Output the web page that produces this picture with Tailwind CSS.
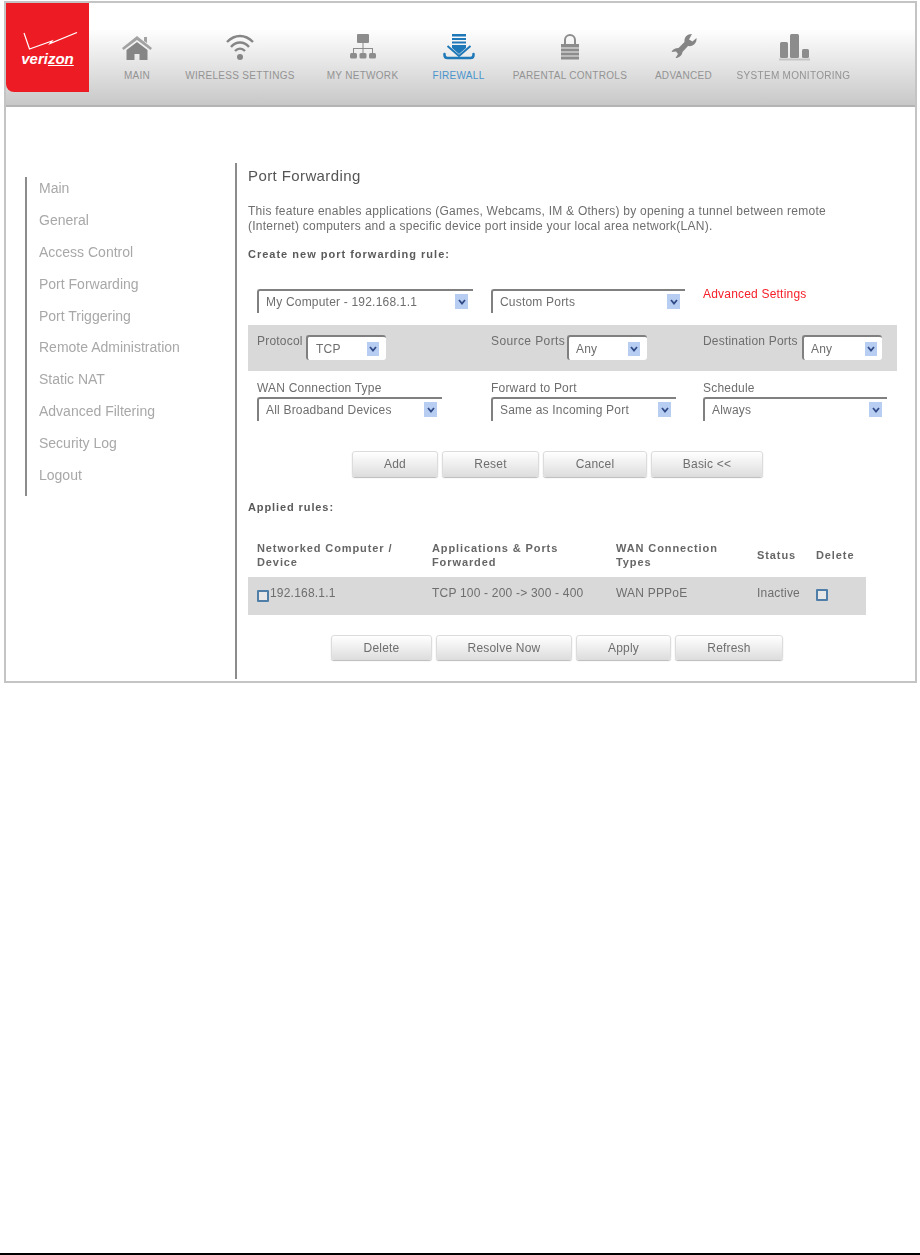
<!DOCTYPE html>
<html lang="en">

<head>
    <meta charset="UTF-8">
    <meta name="viewport" content="width=device-width, initial-scale=1.0">
    <script src="https://cdn.jsdelivr.net/npm/@tailwindcss/browser@4"></script>
    <title>Port Forwarding</title>
</head>

<body class="bg-white font-['Liberation_Sans',Arial,sans-serif]">
    <div class="h-[1255px] flex flex-col pt-px pl-1">

        <!-- Marco -->
        <div class="w-[913px] h-[682px] border-2 border-[#c4c4c4] overflow-hidden blur-[0.5px]">

            <!-- Cabecera -->
            <header class="flex h-[104px] border-b-2 border-[#b4b4b4] bg-gradient-to-b from-white from-25% to-[#c8c8c8]">
                <div class="w-[83px] h-[89px] shrink-0 bg-[#ed1c24] rounded-bl-lg flex flex-col items-center pt-[29px]">
                    <svg class="ml-[6px]" width="56" height="20" viewBox="0 0 56 20" fill="none" stroke="white">
                        <path d="M1 1 L6.500 17 L29 9 L27 11.500 L54 0.500" stroke-width="1.200" />
                    </svg>
                    <span class="text-white font-bold italic text-[15px] leading-[12px] mt-[1px]">veri<span class="underline">zon</span></span>
                </div>

                <nav class="flex pt-[30px] text-[10px] tracking-[0.3px] text-[#939393]">
                    <a class="flex flex-col items-center ml-[36px] w-[24px]">
                        <svg class="h-[28px] w-[32px] shrink-0" viewBox="0 0 32 28" fill="#858585">
                            <path fill="#a2a2a2" d="M16 3 L31 15 L29.500 17 L16 7 L2.500 17 L1 15 Z M23 4 H26 V10 L23 8 Z" />
                            <path d="M5.500 17 L16 9 L26.500 17 V27 H18.500 V21 H13.500 V27 H5.500 Z" />
                        </svg>
                        <span class="mt-[8px] whitespace-nowrap leading-[14px]">MAIN</span>
                    </a>
                    <a class="flex flex-col items-center ml-[36px] w-[110px]">
                        <svg class="h-[28px] w-[30px] shrink-0" viewBox="0 0 30 28" fill="none" stroke="#858585" stroke-width="2.400">
                            <path d="M2 9 C10 1 20 1 28 9 M6 14 C11 8 19 8 24 14 M10 18 C13 15 17 15 20 18" />
                            <circle cx="15" cy="24" r="3" fill="#858585" stroke="none" />
                        </svg>
                        <span class="mt-[8px] whitespace-nowrap leading-[14px]">WIRELESS SETTINGS</span>
                    </a>
                    <a class="flex flex-col items-center ml-[32px] w-[71px]">
                        <svg class="h-[28px] w-[28px] shrink-0" viewBox="0 0 28 28" fill="#8c8c8c">
                            <rect x="8" y="1" width="12" height="9" rx="1" />
                            <path d="M13.500 10 h1 v5 h9.500 v5 h-1 v-4 h-8.500 v4 h-1 v-4 h-8.500 v4 h-1 v-5 h9.500 z" />
                            <rect x="1" y="20" width="7" height="5.500" rx="1.500" />
                            <rect x="10.500" y="20" width="7" height="5.500" rx="1.500" />
                            <rect x="20" y="20" width="7" height="5.500" rx="1.500" />
                        </svg>
                        <span class="mt-[8px] whitespace-nowrap leading-[14px]">MY NETWORK</span>
                    </a>
                    <a class="flex flex-col items-center ml-[35px] w-[51px] text-[#4a94cc]">
                        <svg class="h-[28px] w-[32px] shrink-0" viewBox="0 0 32 28" fill="#1f78b8">
                            <rect x="9" y="1" width="14" height="2.500" />
                            <rect x="9" y="5" width="14" height="2" />
                            <rect x="9" y="8.500" width="14" height="2" />
                            <path d="M9 12 H23 V15 L16 21 L9 15 Z" />
                            <path fill="none" stroke="#1f78b8" stroke-width="2" d="M4.500 13 L16 23 L27.500 13" />
                            <path fill="none" stroke="#1f78b8" stroke-width="2.500" stroke-linecap="round" d="M1.500 21 V22 Q1.500 25 4.500 25 H27.500 Q30.500 25 30.500 22 V21" />
                        </svg>
                        <span class="mt-[8px] whitespace-nowrap leading-[14px]">FIREWALL</span>
                    </a>
                    <a class="flex flex-col items-center ml-[28px] w-[116px]">
                        <svg class="h-[28px] w-[20px] shrink-0" viewBox="0 0 20 28" fill="#8c8c8c">
                            <path d="M4 12 V7 A6 6 0 0 1 16 7 V12 H14 V7 A4 4 0 0 0 6 7 V12 Z" />
                            <rect x="1" y="11" width="18" height="3.500" />
                            <rect x="1" y="15.500" width="18" height="3" />
                            <rect x="1" y="19.500" width="18" height="3" />
                            <rect x="1" y="23.500" width="18" height="3" />
                        </svg>
                        <span class="mt-[8px] whitespace-nowrap leading-[14px]">PARENTAL CONTROLS</span>
                    </a>
                    <a class="flex flex-col items-center ml-[27px] w-[57px]">
                        <svg class="h-[28px] w-[26px] shrink-0" viewBox="0 0 26 28" fill="#858585">
                            <path d="M21 1 C16 1 13 4 13.500 9 L7.500 15 C4 15 2 16 0.500 19 L5 18.500 L7 21 L4.500 25 C8 25 11 22.500 11.500 19 L17 13 C22 14 26 10 25.500 5 L21.500 8.500 L18 6.500 Z" />
                        </svg>
                        <span class="mt-[8px] whitespace-nowrap leading-[14px]">ADVANCED</span>
                    </a>
                    <a class="flex flex-col items-center ml-[26px] w-[111px]">
                        <svg class="h-[28px] w-[32px] shrink-0" viewBox="0 0 32 28" fill="#8c8c8c">
                            <rect x="2" y="9" width="8" height="16" rx="1.500" />
                            <rect x="12" y="1" width="9" height="24" rx="1.500" />
                            <rect x="24" y="16" width="7" height="9" rx="1.500" />
                            <rect x="1" y="25.500" width="31" height="2" fill="#c4c4c4" />
                        </svg>
                        <span class="mt-[8px] whitespace-nowrap leading-[14px]">SYSTEM MONITORING</span>
                    </a>
                </nav>
            </header>

            <div class="flex">
                <!-- Menu lateral -->
                <aside class="w-[210px] ml-[19px] shrink-0 mt-[70px] h-[319px] border-l-2 border-[#8c8c8c] pl-[12px] text-[14px] leading-[32px] text-[#a8a8a8]">
                    <p class="-mt-[5px] h-[31.900px]">Main</p>
                    <p class="h-[31.900px]">General</p>
                    <p class="h-[31.900px]">Access Control</p>
                    <p class="h-[31.900px]">Port Forwarding</p>
                    <p class="h-[31.900px]">Port Triggering</p>
                    <p class="h-[31.900px]">Remote Administration</p>
                    <p class="h-[31.900px]">Static NAT</p>
                    <p class="h-[31.900px]">Advanced Filtering</p>
                    <p class="h-[31.900px]">Security Log</p>
                    <p class="h-[31.900px]">Logout</p>
                </aside>

                <!-- Contenido -->
                <main class="mt-[56px] h-[516px] w-[670px] border-l-2 border-[#8c8c8c] pl-[11px] text-[#6e6e6e] text-[12px] tracking-[0.2px]">
                    <h1 class="h-[24px] leading-[26px] text-[15px] tracking-[0.4px] text-[#555555]">Port Forwarding</h1>
                    <p class="mt-[17px] leading-[15px] w-[600px] tracking-[0.25px]">This feature enables applications (Games, Webcams, IM &amp; Others) by opening a tunnel between remote (Internet) computers and a specific device port inside your local area network(LAN).</p>
                    <p class="mt-[13px] h-[14px] leading-[14px] font-bold text-[11px] tracking-[1px] text-[#5a5a5a]">Create new port forwarding rule:</p>

                    <!-- Fila 1 -->
                    <div class="mt-[28px] pl-[9px] grid grid-cols-[234px_212px_1fr]">
                        <div class="w-[216px] h-[24px] border-t-2 border-l-2 border-[#808080] rounded-tl-[3px] flex justify-between pl-[7px] pr-[5px] pt-[3px]">
                            <span class="leading-[15px] mt-px">My Computer - 192.168.1.1</span>
                            <span class="w-[13px] h-[15px] bg-[#b8cdf2] flex items-center justify-center">
                                <svg width="8" height="6" viewBox="0 0 8 6" fill="none" stroke="#2f4a86" stroke-width="1.800"><path d="M1 1 L4 4.500 L7 1" /></svg>
                            </span>
                        </div>
                        <div class="w-[194px] h-[24px] border-t-2 border-l-2 border-[#808080] rounded-tl-[3px] flex justify-between pl-[7px] pr-[5px] pt-[3px]">
                            <span class="leading-[15px] mt-px">Custom Ports</span>
                            <span class="w-[13px] h-[15px] bg-[#b8cdf2] flex items-center justify-center">
                                <svg width="8" height="6" viewBox="0 0 8 6" fill="none" stroke="#2f4a86" stroke-width="1.800"><path d="M1 1 L4 4.500 L7 1" /></svg>
                            </span>
                        </div>
                        <span class="text-[#f5202a] leading-[10px]">Advanced Settings</span>
                    </div>

                    <!-- Banda gris -->
                    <div class="mt-[12px] h-[46px] w-[649px] bg-[#d9d9d9] pl-[9px] pt-[10px] grid grid-cols-[234px_212px_1fr]">
                        <div class="flex">
                            <span class="w-[49px] leading-[12px]">Protocol</span>
                            <div class="w-[80px] h-[25px] bg-white rounded-[3px] border-t-2 border-l-2 border-[#808080] flex justify-between pl-[8px] pr-[7px] pt-[5px]">
                                <span class="leading-[14px]">TCP</span>
                                <span class="w-[12px] h-[14px] bg-[#b8cdf2] flex items-center justify-center">
                                    <svg width="8" height="6" viewBox="0 0 8 6" fill="none" stroke="#2f4a86" stroke-width="1.800"><path d="M1 1 L4 4.500 L7 1" /></svg>
                                </span>
                            </div>
                        </div>
                        <div class="flex">
                            <span class="w-[76px] leading-[12px] tracking-[0.4px]">Source Ports</span>
                            <div class="w-[80px] h-[25px] bg-white rounded-[3px] border-t-2 border-l-2 border-[#808080] flex justify-between pl-[7px] pr-[7px] pt-[5px]">
                                <span class="leading-[14px]">Any</span>
                                <span class="w-[12px] h-[14px] bg-[#b8cdf2] flex items-center justify-center">
                                    <svg width="8" height="6" viewBox="0 0 8 6" fill="none" stroke="#2f4a86" stroke-width="1.800"><path d="M1 1 L4 4.500 L7 1" /></svg>
                                </span>
                            </div>
                        </div>
                        <div class="flex">
                            <span class="w-[99px] leading-[12px] whitespace-nowrap">Destination Ports</span>
                            <div class="w-[80px] h-[25px] bg-white rounded-[3px] border-t-2 border-l-2 border-[#808080] flex justify-between pl-[7px] pr-[5px] pt-[5px]">
                                <span class="leading-[14px]">Any</span>
                                <span class="w-[12px] h-[14px] bg-[#b8cdf2] flex items-center justify-center">
                                    <svg width="8" height="6" viewBox="0 0 8 6" fill="none" stroke="#2f4a86" stroke-width="1.800"><path d="M1 1 L4 4.500 L7 1" /></svg>
                                </span>
                            </div>
                        </div>
                    </div>

                    <!-- Fila 3 -->
                    <div class="mt-[10px] pl-[9px] grid grid-cols-[234px_212px_1fr]">
                        <div>
                            <p class="h-[16px] leading-[14px]">WAN Connection Type</p>
                            <div class="w-[185px] h-[24px] border-t-2 border-l-2 border-[#808080] rounded-tl-[3px] flex justify-between pl-[7px] pr-[5px] pt-[3px]">
                                <span class="leading-[15px] mt-px">All Broadband Devices</span>
                                <span class="w-[13px] h-[15px] bg-[#b8cdf2] flex items-center justify-center">
                                    <svg width="8" height="6" viewBox="0 0 8 6" fill="none" stroke="#2f4a86" stroke-width="1.800"><path d="M1 1 L4 4.500 L7 1" /></svg>
                                </span>
                            </div>
                        </div>
                        <div>
                            <p class="h-[16px] leading-[14px]">Forward to Port</p>
                            <div class="w-[185px] h-[24px] border-t-2 border-l-2 border-[#808080] rounded-tl-[3px] flex justify-between pl-[7px] pr-[5px] pt-[3px]">
                                <span class="leading-[15px] mt-px">Same as Incoming Port</span>
                                <span class="w-[13px] h-[15px] bg-[#b8cdf2] flex items-center justify-center">
                                    <svg width="8" height="6" viewBox="0 0 8 6" fill="none" stroke="#2f4a86" stroke-width="1.800"><path d="M1 1 L4 4.500 L7 1" /></svg>
                                </span>
                            </div>
                        </div>
                        <div>
                            <p class="h-[16px] leading-[14px]">Schedule</p>
                            <div class="w-[184px] h-[24px] border-t-2 border-l-2 border-[#808080] rounded-tl-[3px] flex justify-between pl-[7px] pr-[5px] pt-[3px]">
                                <span class="leading-[15px] mt-px">Always</span>
                                <span class="w-[13px] h-[15px] bg-[#b8cdf2] flex items-center justify-center">
                                    <svg width="8" height="6" viewBox="0 0 8 6" fill="none" stroke="#2f4a86" stroke-width="1.800"><path d="M1 1 L4 4.500 L7 1" /></svg>
                                </span>
                            </div>
                        </div>
                    </div>

                    <!-- Botones del formulario -->
                    <div class="mt-[30px] ml-[104px] flex gap-[4px] h-[26px]">
                        <button class="w-[86px] rounded-[3px] border border-[#dcdcdc] bg-gradient-to-b from-white to-[#dedede] shadow-[0_1px_1px_#bbbbbb]">Add</button>
                        <button class="w-[97px] rounded-[3px] border border-[#dcdcdc] bg-gradient-to-b from-white to-[#dedede] shadow-[0_1px_1px_#bbbbbb]">Reset</button>
                        <button class="w-[104px] rounded-[3px] border border-[#dcdcdc] bg-gradient-to-b from-white to-[#dedede] shadow-[0_1px_1px_#bbbbbb]">Cancel</button>
                        <button class="w-[112px] rounded-[3px] border border-[#dcdcdc] bg-gradient-to-b from-white to-[#dedede] shadow-[0_1px_1px_#bbbbbb]">Basic &lt;&lt;</button>
                    </div>

                    <p class="mt-[23px] h-[14px] leading-[14px] font-bold text-[11px] tracking-[0.9px] text-[#5a5a5a]">Applied rules:</p>

                    <!-- Tabla -->
                    <div class="mt-[27px] pl-[9px] grid grid-cols-[175px_184px_141px_59px_50px] items-center font-bold text-[11px] leading-[14px] tracking-[0.9px] text-[#666666]">
                        <span>Networked Computer / Device</span>
                        <span>Applications &amp; Ports Forwarded</span>
                        <span class="w-[115px]">WAN Connection Types</span>
                        <span>Status</span>
                        <span>Delete</span>
                    </div>
                    <div class="mt-[8px] h-[38px] w-[618px] bg-[#d9d9d9] pl-[9px] pb-[6px] grid grid-cols-[175px_184px_141px_59px_50px] items-center">
                        <span class="flex items-center">
                            <span class="w-[12px] h-[12px] border-2 border-[#4f7fa8] bg-[#e8e8e8] rounded-[1px] mt-[5px] mr-[1px]"></span>192.168.1.1
                        </span>
                        <span>TCP 100 - 200 -&gt; 300 - 400</span>
                        <span>WAN PPPoE</span>
                        <span>Inactive</span>
                        <span class="w-[12px] h-[12px] border-2 border-[#4f7fa8] bg-[#e8e8e8] rounded-[1px] mt-[4px]"></span>
                    </div>

                    <!-- Botones de la tabla -->
                    <div class="mt-[20px] ml-[83px] flex gap-[4px] h-[25px]">
                        <button class="w-[101px] rounded-[3px] border border-[#dcdcdc] bg-gradient-to-b from-white to-[#dedede] shadow-[0_1px_1px_#bbbbbb]">Delete</button>
                        <button class="w-[136px] rounded-[3px] border border-[#dcdcdc] bg-gradient-to-b from-white to-[#dedede] shadow-[0_1px_1px_#bbbbbb]">Resolve Now</button>
                        <button class="w-[95px] rounded-[3px] border border-[#dcdcdc] bg-gradient-to-b from-white to-[#dedede] shadow-[0_1px_1px_#bbbbbb]">Apply</button>
                        <button class="w-[108px] rounded-[3px] border border-[#dcdcdc] bg-gradient-to-b from-white to-[#dedede] shadow-[0_1px_1px_#bbbbbb]">Refresh</button>
                    </div>
                </main>
            </div>
        </div>

        <!-- Linea inferior -->
        <div class="mt-auto -ml-1 h-[2px] bg-black"></div>
    </div>
</body>

</html>
